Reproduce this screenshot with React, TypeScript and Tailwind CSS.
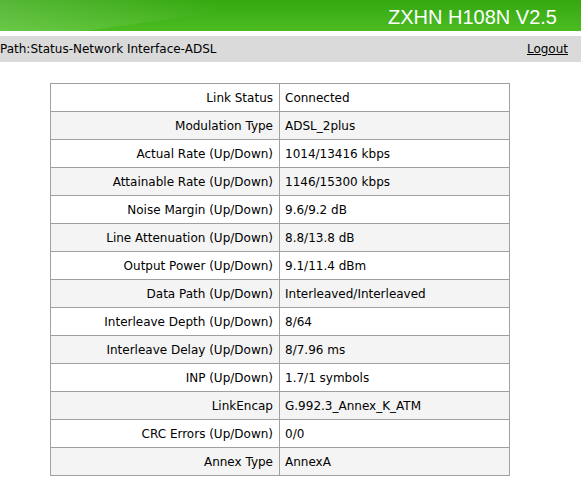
const rows: [string, string][] = [
  ["Link Status", "Connected"],
  ["Modulation Type", "ADSL_2plus"],
  ["Actual Rate (Up/Down)", "1014/13416 kbps"],
  ["Attainable Rate (Up/Down)", "1146/15300 kbps"],
  ["Noise Margin (Up/Down)", "9.6/9.2 dB"],
  ["Line Attenuation (Up/Down)", "8.8/13.8 dB"],
  ["Output Power (Up/Down)", "9.1/11.4 dBm"],
  ["Data Path (Up/Down)", "Interleaved/Interleaved"],
  ["Interleave Depth (Up/Down)", "8/64"],
  ["Interleave Delay (Up/Down)", "8/7.96 ms"],
  ["INP (Up/Down)", "1.7/1 symbols"],
  ["LinkEncap", "G.992.3_Annex_K_ATM"],
  ["CRC Errors (Up/Down)", "0/0"],
  ["Annex Type", "AnnexA"],
];

export default function App() {
  return (
    <div className="w-[586px] h-[483px] bg-white overflow-hidden font-['DejaVu_Sans',sans-serif] text-[12px] text-black">
      <div className="w-[581px]">
        <div className="relative h-[31px] overflow-hidden bg-gradient-to-b from-[#34a80e] to-[#4cbc22]">
          <div className="absolute left-[-40px] top-[-30px] w-[260px] h-[60px] rotate-[-8deg] bg-gradient-to-r from-white/20 to-transparent" />
          <div className="relative flex h-full items-center justify-end pr-[24px] pt-[2px] font-['Liberation_Sans',Arial,sans-serif] text-[20px] text-white">
            ZXHN H108N V2.5
          </div>
        </div>
        <div className="mt-[5px] flex h-[26px] items-center justify-between bg-[#dadada] pr-[13px]">
          <span>Path:Status-Network Interface-ADSL</span>
          <a href="#" className="underline text-black">Logout</a>
        </div>
      </div>

      <table className="ml-[50px] mt-[21px] w-[460px] border-collapse">
        <tbody>
          {rows.map(([label, value], i) => (
            <tr key={label} className={i % 2 === 1 ? "bg-[#f4f4f4]" : "bg-white"}>
              <td className="h-[28px] w-[229px] border border-[#a0a0a0] px-[6px] text-right">{label}</td>
              <td className="h-[28px] border border-[#a0a0a0] px-[5px]">{value}</td>
            </tr>
          ))}
        </tbody>
      </table>
    </div>
  );
}
